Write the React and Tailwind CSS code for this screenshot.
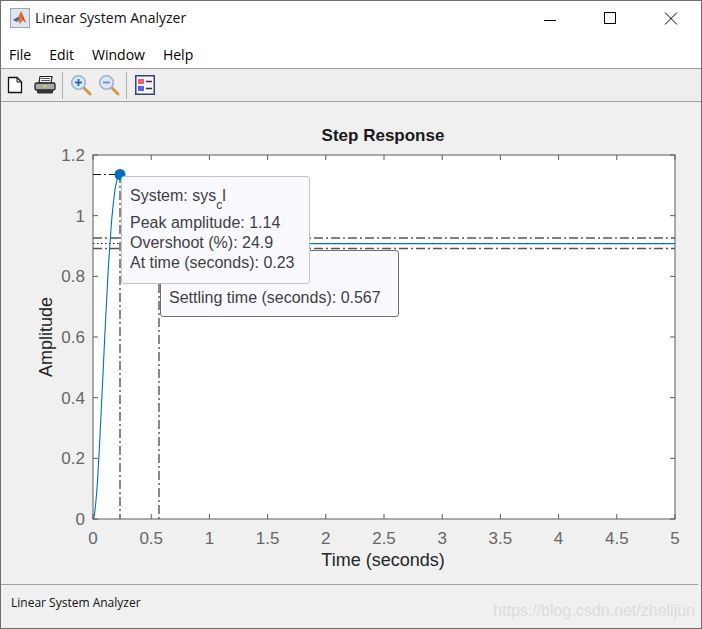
import React from 'react';

const X0 = 93;
const X1 = 675;
const Y0 = 519;
const Y1 = 155;
const toX = (t) => X0 + (t / 5) * (X1 - X0);
const toY = (v) => Y0 - (v / 1.2) * (Y0 - Y1);

const X_TICKS = [0, 0.5, 1, 1.5, 2, 2.5, 3, 3.5, 4, 4.5, 5];
const Y_TICKS = [0, 0.2, 0.4, 0.6, 0.8, 1, 1.2];

// second order step response, peak 1.14 at 0.23s, settling to 0.908
const curvePoints = () => {
  const pts = [];
  const wn = Math.PI / 0.23 / Math.sqrt(1 - 0.404 * 0.404);
  const z = 0.404;
  const wd = wn * Math.sqrt(1 - z * z);
  for (let t = 0; t <= 5; t += 0.01) {
    const v = 0.908 * (1 - Math.exp(-z * wn * t) * (Math.cos(wd * t) + (z * wn / wd) * Math.sin(wd * t)));
    pts.push(`${toX(t).toFixed(1)},${toY(v).toFixed(1)}`);
  }
  return pts.join(' ');
};

const MatlabIcon = () => (
  <svg width="20" height="20" viewBox="0 0 20 20" className="shrink-0">
    <rect x="0.5" y="0.5" width="19" height="19" fill="#dfe6ee" stroke="#9aa5b1" />
    <path d="M3 12 L8 9 L11 3 L16 15 L13 12 L10 16 L8 12 Z" fill="#e8762d" />
    <path d="M3 12 L8 9 L9 11 L7 14 Z" fill="#2f6fb5" />
    <path d="M11 3 L16 15 L13 12 Z" fill="#c9452a" />
  </svg>
);

const NewIcon = () => (
  <svg width="16" height="18" viewBox="0 0 16 18">
    <path d="M1.5 1.5 H10 L14.5 6 V16.5 H1.5 Z" fill="#fff" stroke="#111" strokeWidth="1.3" />
    <path d="M10 1.5 V6 H14.5" fill="none" stroke="#111" />
  </svg>
);

const PrintIcon = () => (
  <svg width="22" height="20" viewBox="0 0 22 20">
    <path d="M6 1.5 H18 L17 8 H5 Z" fill="#fff" stroke="#222" strokeWidth="1.2" />
    <path d="M7 3.5 H16 M7 5.5 H16" stroke="#555" />
    <rect x="1" y="8" width="20" height="7" rx="1.5" fill="#a9a9a9" stroke="#222" strokeWidth="1.3" />
    <rect x="9" y="10.5" width="4" height="1.5" fill="#e8d820" />
    <rect x="3" y="15" width="16" height="3.5" rx="1" fill="#333" />
  </svg>
);

const ZoomIcon = ({ minus }) => (
  <svg width="22" height="22" viewBox="0 0 22 22">
    <path d="M13 13 L20 20" stroke="#d9953a" strokeWidth="3" strokeLinecap="round" />
    <circle cx="8.5" cy="8.5" r="6.8" fill="#d8e8f8" stroke="#9db4cc" strokeWidth="1.6" />
    <path d="M5 8.5 H12" stroke={minus ? '#7f8fa8' : '#2f62b5'} strokeWidth="1.8" />
    {!minus && <path d="M8.5 5 V12" stroke="#2f62b5" strokeWidth="1.8" />}
  </svg>
);

const LegendIcon = () => (
  <svg width="20" height="20" viewBox="0 0 20 20">
    <rect x="0.75" y="0.75" width="18.5" height="18.5" fill="#f4f4fa" stroke="#33446e" strokeWidth="1.5" />
    <rect x="3" y="4" width="6" height="5" fill="#e8626a" />
    <rect x="3" y="11" width="6" height="5" fill="#5c62e0" />
    <path d="M11 6.5 H17 M11 13.5 H17" stroke="#333" strokeWidth="1.5" />
  </svg>
);

const WindowControls = () => (
  <div className="flex items-center h-full">
    <svg width="14" height="14" viewBox="0 0 14 14" className="mr-[46px]">
      <path d="M1 9.5 H13" stroke="#000" />
    </svg>
    <svg width="14" height="14" viewBox="0 0 14 14" className="mr-[47px]">
      <rect x="1.5" y="1.5" width="11" height="11" fill="none" stroke="#000" />
    </svg>
    <svg width="14" height="14" viewBox="0 0 14 14" className="mr-[23px]">
      <path d="M1 1.5 L13 13.5 M13 1.5 L1 13.5" stroke="#000" />
    </svg>
  </div>
);

const StepChart = () => {
  const tick = '#595959';
  const dash = '#555';
  return (
    <svg width="702" height="482" viewBox="0 102 702 482" className="block">
      <rect x={X0} y={Y1} width={X1 - X0} height={Y0 - Y1} fill="#fff" />
      <text x="383" y="141" textAnchor="middle" fontSize="17" fontWeight="700" fill="#1a1a1a">Step Response</text>

      {X_TICKS.map((t) => (
        <g key={t}>
          <path d={`M${toX(t)} ${Y0} v-5 M${toX(t)} ${Y1} v5`} stroke={tick} />
          <text x={toX(t)} y="544" textAnchor="middle" fontSize="17" fill="#666">{t}</text>
        </g>
      ))}
      {Y_TICKS.map((v) => (
        <g key={v}>
          <path d={`M${X0} ${toY(v)} h5 M${X1} ${toY(v)} h-5`} stroke={tick} />
          <text x="85" y={toY(v) + 6} textAnchor="end" fontSize="17" fill="#666">{v}</text>
        </g>
      ))}

      <text x="383" y="566" textAnchor="middle" fontSize="18" fill="#262626">Time (seconds)</text>
      <text transform="translate(52 337) rotate(-90)" textAnchor="middle" fontSize="18" fill="#262626">Amplitude</text>

      {/* settling bounds and markers */}
      <path d="M93 238 H675 M93 248.5 H675" stroke={dash} strokeWidth="1.3" strokeDasharray="9 3 2 3" fill="none" />
      <path d="M93 243.5 H120" stroke="#111" strokeDasharray="1.5 2.5" fill="none" />
      <path d="M93 174.5 H120" stroke="#111" strokeDasharray="8 3 2 3" fill="none" />
      <path d="M120 174 V519 M159 250 V519" stroke={dash} strokeWidth="1.4" strokeDasharray="9 3 2 3" fill="none" />
      <polyline points={curvePoints()} fill="none" stroke="#0072bd" strokeWidth="1.1" />
      <circle cx="120" cy="174.5" r="5.5" fill="#0072bd" />
      <rect x={X0} y={Y1} width={X1 - X0} height={Y0 - Y1} fill="none" stroke="#5a5a5a" />
    </svg>
  );
};

export default function App() {
  return (
    <div
      className="w-[702px] h-[629px] flex flex-col bg-[#f0f0f0] border border-[#6e6e6e] overflow-hidden text-[#000]"
      style={{ fontFamily: '"Liberation Sans", Arial, sans-serif' }}
    >
      {/* Title bar */}
      <div className="h-[33px] bg-white flex items-center justify-between pl-[9px] shrink-0">
        <div className="flex items-center gap-[5px]">
          <MatlabIcon />
          <span className="text-[14px] text-[#111] font-['Open_Sans',sans-serif]">Linear System Analyzer</span>
        </div>
        <WindowControls />
      </div>

      {/* Menu bar */}
      <div className="h-[34px] bg-white flex items-center gap-[18px] pl-[8px] text-[14px] font-['Open_Sans',sans-serif] shrink-0 pt-[6px]">
        <span>File</span>
        <span>Edit</span>
        <span>Window</span>
        <span>Help</span>
      </div>

      {/* Toolbar */}
      <div className="h-[34px] bg-[#eeeeee] border-y border-[#a0a0a0] flex items-center pl-[6px] shrink-0">
        <NewIcon />
        <div className="ml-[11px]"><PrintIcon /></div>
        <div className="w-px h-[27px] bg-[#b0b0b0] ml-[6px]" />
        <div className="ml-[7px]"><ZoomIcon /></div>
        <div className="ml-[6px]"><ZoomIcon minus /></div>
        <div className="w-px h-[27px] bg-[#b0b0b0] ml-[6px]" />
        <div className="ml-[8px]"><LegendIcon /></div>
      </div>

      {/* Plot area */}
      <div className="relative -ml-px h-[482px] shrink-0">
        <StepChart />

        <div className="absolute left-[160px] top-[148px] w-[239px] h-[67px] bg-[#f9f9ff] border border-[#707070] rounded-[3px] text-[16px] text-[#404040] pl-[8px] pt-[37px] leading-[20px]">
          Settling time (seconds): 0.567
        </div>

        <div className="absolute left-[121px] top-[74px] w-[189px] h-[108px] bg-[#f9f9ff] border border-[#c4c4c4] rounded-[3px] text-[16px] text-[#404040] pl-[8px] pt-[9px] leading-[20px]">
          <div className="h-[27px]">
            System: sys<sub className="text-[12px] align-[-5px] leading-none">c</sub>l
          </div>
          <div className="leading-[20px]">Peak amplitude: 1.14</div>
          <div className="leading-[20px]">Overshoot (%): 24.9</div>
          <div className="leading-[20px]">At time (seconds): 0.23</div>
        </div>
      </div>

      {/* Status bar */}
      <div className="relative flex-1 border-t border-[#a0a0a0] mr-[3px] pl-[10px] pt-[9px] text-[12px] text-[#111] font-['Open_Sans',sans-serif]">
        Linear System Analyzer
        <span className="absolute right-[3px] top-[14px] text-[16px] text-[#dcdcdc] font-['Liberation_Sans',sans-serif]">
          https://blog.csdn.net/zhelijun
        </span>
      </div>
    </div>
  );
}
